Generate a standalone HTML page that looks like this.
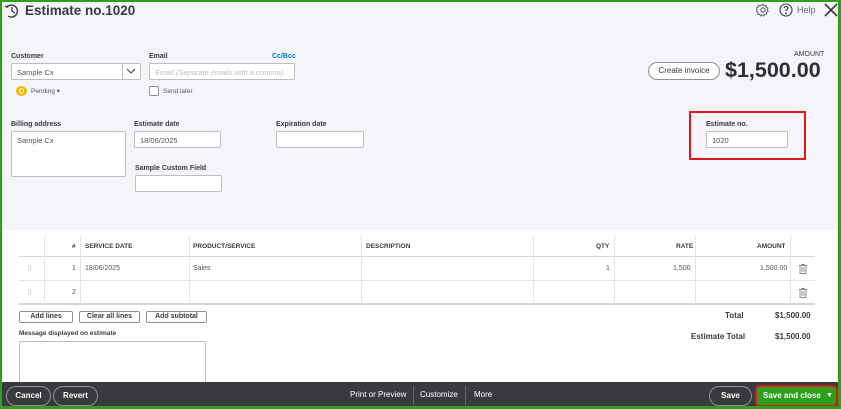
<!DOCTYPE html>
<html><head><meta charset="utf-8"><style>
*{box-sizing:border-box;margin:0;padding:0}
body{width:841px;height:409px;overflow:hidden;font-family:"Liberation Sans",sans-serif;color:#393a3d;position:relative;background:#fff}
.a{position:absolute}
.frame{position:absolute;left:0;top:0;width:841px;height:409px;border:2px solid #2ca01c;border-right-width:3px;border-bottom-width:3px;pointer-events:none;z-index:10}
.lbl{position:absolute;font-size:7px;font-weight:bold;color:#393a3d}
.inp{position:absolute;background:#fff;border:1px solid #babec5;border-radius:2px;font-size:7.5px;color:#555;padding:4px 5px}
.th{position:absolute;top:243px;font-size:6.5px;font-weight:bold}
.td{position:absolute;font-size:7px;color:#555}
.vl{position:absolute;width:1px;background:#e3e5e8;top:236px;height:68px}
.btn{position:absolute;top:311px;height:12px;border:1px solid #8d9096;border-radius:2px;font-size:7px;font-weight:bold;text-align:center;line-height:10px;background:#fff}
.fb{position:absolute;top:386px;height:20px;border:1px solid #8d9096;border-radius:10px;color:#fff;font-size:8px;font-weight:bold;text-align:center;line-height:18px}
.ft{position:absolute;top:390px;color:#fff;font-size:8px}
</style></head><body>
<div class="a" style="left:0;top:0;width:841px;height:230px;background:#f4f5f8"></div>
<svg class="a" style="left:4px;top:3px" width="16" height="16" viewBox="0 0 16 16" fill="none" stroke="#393a3d" stroke-width="1.3"><path d="M3 4A6 6 0 1 1 4 13"/><path d="M1 3l2 1.3 1-2"/><path d="M8 4v4l3 2"/></svg>
<div class="a" style="left:25px;top:3px;font-size:13.5px;font-weight:bold;color:#393a3d">Estimate no.1020</div>
<svg class="a" style="left:756px;top:3px" width="14" height="14" viewBox="0 0 14 14" fill="none" stroke="#6b6c72" stroke-width="1.1"><circle cx="7" cy="7" r="2.2"/><path d="M7 1.2l1 1.6 1.9-.5.3 1.9 1.8.8-.8 1.8 1 1.5-1.7 1 .1 1.9-1.9.1-1 1.6-1.5-1.1-1.6 1.1-1-1.6-1.9-.1.1-1.9-1.7-1 1-1.5-.8-1.8 1.8-.8.3-1.9 1.9.5z"/></svg>
<svg class="a" style="left:779px;top:3px" width="14" height="14" viewBox="0 0 14 14" fill="none" stroke="#393a3d" stroke-width="1.1"><circle cx="7" cy="7" r="6"/><path d="M5.2 5.3a1.8 1.8 0 1 1 2.4 1.7c-.5.2-.6.6-.6 1.2"/><circle cx="7" cy="10.3" r=".4" fill="#393a3d"/></svg>
<div class="a" style="left:797px;top:5px;font-size:9px;color:#6b6c72">Help</div>
<svg class="a" style="left:824px;top:3px" width="14" height="14" viewBox="0 0 14 14" stroke="#393a3d" stroke-width="1.6"><path d="M1 1l12 12M13 1L1 13"/></svg>

<div class="lbl" style="left:11px;top:53px">Customer</div>
<div class="inp" style="left:11px;top:63px;width:130px;height:17px">Sample Cx</div>
<div class="a" style="left:122px;top:63px;width:1px;height:17px;background:#babec5"></div>
<svg class="a" style="left:126px;top:68px" width="10" height="6" viewBox="0 0 10 6" fill="none" stroke="#393a3d"><path d="M1 1l4 4 4-4"/></svg>
<div class="a" style="left:16px;top:86px;width:11px;height:10px;border-radius:50%;background:#f2b705"></div>
<div class="a" style="left:19px;top:88px;width:5px;height:6px;border-radius:50%;border:1px solid #fff"></div>
<div class="a" style="left:31px;top:87px;font-size:6.5px;color:#555">Pending ▾</div>

<div class="lbl" style="left:149px;top:53px">Email</div>
<div class="a" style="left:272px;top:53px;font-size:7px;font-weight:bold;color:#0077c5">Cc/Bcc</div>
<div class="inp" style="left:149px;top:63px;width:146px;height:17px;color:#babec5;font-style:italic">Email (Separate emails with a comma)</div>
<div class="a" style="left:149px;top:86px;width:10px;height:10px;border:1px solid #8d9096;border-radius:2px;background:#fff"></div>
<div class="a" style="left:163px;top:88px;font-size:6.5px;color:#555">Send later</div>

<div class="a" style="left:794px;top:51px;font-size:7px;color:#393a3d">AMOUNT</div>
<div class="a" style="left:648px;top:62px;width:72px;height:18px;border:1px solid #8d9096;border-radius:9px;font-size:8px;text-align:center;line-height:16px;background:#fff">Create invoice</div>
<div class="a" style="left:725px;top:58px;font-size:21.5px;font-weight:bold;color:#2d2e31">$1,500.00</div>

<div class="lbl" style="left:11px;top:121px">Billing address</div>
<div class="inp" style="left:11px;top:131px;width:115px;height:46px">Sample Cx</div>
<div class="lbl" style="left:134px;top:121px">Estimate date</div>
<div class="inp" style="left:134px;top:131px;width:87px;height:17px">18/06/2025</div>
<div class="lbl" style="left:135px;top:165px">Sample Custom Field</div>
<div class="inp" style="left:135px;top:175px;width:87px;height:17px"></div>
<div class="lbl" style="left:276px;top:121px">Expiration date</div>
<div class="inp" style="left:276px;top:131px;width:88px;height:17px"></div>

<div class="a" style="left:689px;top:111px;width:117px;height:49px;border:2px solid #e3161c"></div>
<div class="lbl" style="left:706px;top:121px">Estimate no.</div>
<div class="inp" style="left:706px;top:131px;width:82px;height:17px">1020</div>

<div class="a" style="left:19px;top:256px;width:796px;height:1px;background:#d4d7dc"></div>
<div class="a" style="left:19px;top:280px;width:796px;height:1px;background:#e3e5e8"></div>
<div class="a" style="left:19px;top:303px;width:796px;height:2px;background:#d4d7dc"></div>
<div class="vl" style="left:44px"></div><div class="vl" style="left:80px"></div><div class="vl" style="left:189px"></div><div class="vl" style="left:361px"></div><div class="vl" style="left:533px"></div><div class="vl" style="left:614px"></div><div class="vl" style="left:695px"></div><div class="vl" style="left:790px"></div>
<div class="th" style="left:72px">#</div>
<div class="th" style="left:85px">SERVICE DATE</div>
<div class="th" style="left:193px">PRODUCT/SERVICE</div>
<div class="th" style="left:366px">DESCRIPTION</div>
<div class="th" style="left:596px">QTY</div>
<div class="th" style="left:676px">RATE</div>
<div class="th" style="left:757px">AMOUNT</div>
<div class="td" style="left:27px;top:265px;color:#bbb">⠿</div>
<div class="td" style="left:72px;top:265px">1</div>
<div class="td" style="left:85px;top:265px">18/06/2025</div>
<div class="td" style="left:193px;top:265px">Sales</div>
<div class="td" style="left:606px;top:265px">1</div>
<div class="td" style="left:673px;top:265px">1,500</div>
<div class="td" style="left:760px;top:265px">1,500.00</div>
<div class="td" style="left:27px;top:289px;color:#bbb">⠿</div>
<div class="td" style="left:72px;top:289px">2</div>
<svg class="a" style="left:799px;top:264px" width="8" height="10" viewBox="0 0 8 10" fill="none" stroke="#8d9096"><path d="M0 1.5h8M2.5 1.5V.5h3v1M1 1.5v8h6v-8M3 3v5M5 3v5"/></svg>
<svg class="a" style="left:799px;top:288px" width="8" height="10" viewBox="0 0 8 10" fill="none" stroke="#8d9096"><path d="M0 1.5h8M2.5 1.5V.5h3v1M1 1.5v8h6v-8M3 3v5M5 3v5"/></svg>

<div class="btn" style="left:19px;width:54px">Add lines</div>
<div class="btn" style="left:79px;width:61px">Clear all lines</div>
<div class="btn" style="left:146px;width:61px">Add subtotal</div>
<div class="a" style="left:725px;top:311px;font-size:8px;font-weight:bold">Total</div>
<div class="a" style="left:775px;top:311px;font-size:8px;font-weight:bold">$1,500.00</div>
<div class="a" style="left:691px;top:332px;font-size:8px;font-weight:bold">Estimate Total</div>
<div class="a" style="left:775px;top:332px;font-size:8px;font-weight:bold">$1,500.00</div>
<div class="lbl" style="left:19px;top:330px;font-size:6.5px">Message displayed on estimate</div>
<div class="inp" style="left:19px;top:341px;width:187px;height:45px"></div>

<div class="a" style="left:0;top:382px;width:841px;height:27px;background:#393a3d"></div>
<div class="fb" style="left:6px;width:45px">Cancel</div>
<div class="fb" style="left:53px;width:45px">Revert</div>
<div class="ft" style="left:350px">Print or Preview</div>
<div class="a" style="left:413px;top:386px;width:1px;height:19px;background:#666"></div>
<div class="ft" style="left:420px">Customize</div>
<div class="a" style="left:465px;top:386px;width:1px;height:19px;background:#666"></div>
<div class="ft" style="left:474px">More</div>
<div class="fb" style="left:709px;width:43px">Save</div>
<div class="a" style="left:755px;top:385px;width:83px;height:22px;border:2px solid #e3161c;border-radius:5px;background:#2ca01c"></div>
<div class="a" style="left:763px;top:385px;line-height:22px;font-size:8px;font-weight:bold;color:#fff">Save and close</div>
<div class="a" style="left:826px;top:385px;line-height:22px;font-size:7px;color:#fff">▼</div>
<div class="frame"></div>
</body></html>
